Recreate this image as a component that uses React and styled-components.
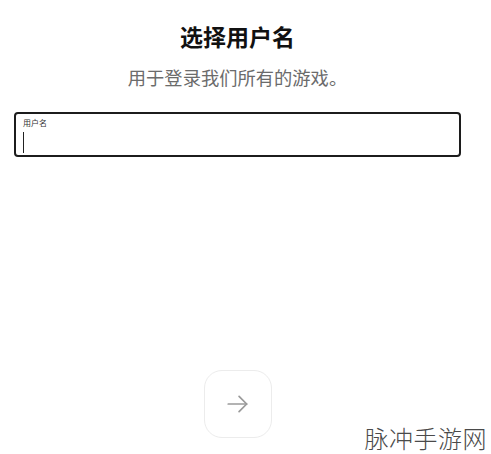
import React from "react";
import styled, { createGlobalStyle } from "styled-components";

const GlobalStyle = createGlobalStyle`
  html, body {
    margin: 0;
    padding: 0;
    background: #ffffff;
    font-family: "Noto Sans CJK SC", "Noto Sans", sans-serif;
  }
`;

const Page = styled.div`
  width: 491px;
  height: 454px;
  display: flex;
  flex-direction: column;
  align-items: center;
  box-sizing: border-box;
  padding: 20px 30px 0 14px;
  position: relative;
  overflow: hidden;
`;

const Title = styled.h1`
  margin: 0;
  font-size: 23px;
  line-height: 32px;
  font-weight: 700;
  color: #111;
`;

const Subtitle = styled.p`
  margin: 12px 0 0;
  font-size: 18.3px;
  line-height: 26px;
  color: #6b6b6b;
  font-weight: 400;
`;

const Field = styled.label`
  margin-top: 22px;
  width: 447px;
  height: 45px;
  box-sizing: border-box;
  border: 2px solid #1c1c1c;
  border-radius: 4px;
  padding: 4px 7px 0;
  display: flex;
  flex-direction: column;
`;

const FieldLabel = styled.span`
  font-size: 8px;
  line-height: 10px;
  color: #333;
`;

const Cursor = styled.span`
  display: block;
  width: 1px;
  height: 21px;
  margin-top: 4px;
  background: #222;
`;

const NextButton = styled.button`
  margin-top: 213px;
  width: 68px;
  height: 68px;
  border-radius: 18px;
  border: 1.5px solid #ececec;
  background: #fff;
  display: flex;
  align-items: center;
  justify-content: center;
  padding: 0;
  cursor: pointer;
`;

const Watermark = styled.div`
  position: absolute;
  right: 4px;
  bottom: 1px;
  font-size: 24px;
  line-height: 30px;
  color: #4a4a4a;
  font-weight: 300;
  letter-spacing: 0.5px;
`;

const App = () => {
  return (
    <>
      <GlobalStyle />
      <Page>
        <Title>选择用户名</Title>
        <Subtitle>用于登录我们所有的游戏。</Subtitle>
        <Field>
          <FieldLabel>用户名</FieldLabel>
          <Cursor />
        </Field>
        <NextButton aria-label="next">
          <svg width="26" height="26" viewBox="0 0 24 24" fill="none" stroke="#9a9a9a" strokeWidth="1.6" strokeLinecap="round" strokeLinejoin="round">
            <path d="M3 12h17" />
            <path d="M13 5l7 7-7 7" />
          </svg>
        </NextButton>
        <Watermark>脉冲手游网</Watermark>
      </Page>
    </>
  );
};

export default App;
